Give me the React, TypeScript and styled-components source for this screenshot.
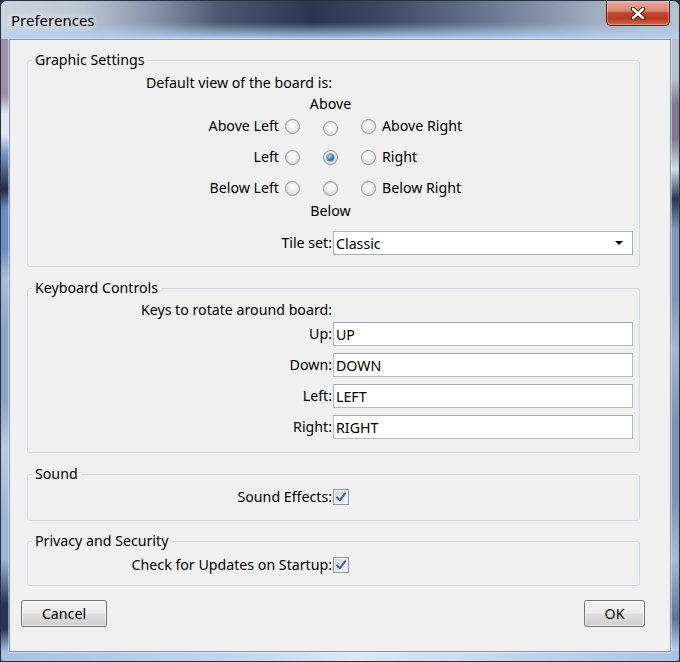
import React from 'react'
import styled, { createGlobalStyle } from 'styled-components'

const GlobalStyle = createGlobalStyle`
  html, body {
    margin: 0;
    padding: 0;
    background: #24324d;
  }
  body {
    font-family: "Noto Sans", "Open Sans", sans-serif;
    font-size: 14.2px;
    color: #000;
  }
  #root {
    width: 680px;
    height: 662px;
  }
`

const Window = styled.div`
  width: 680px;
  height: 662px;
  box-sizing: border-box;
  border: 1px solid #26303f;
  border-radius: 7px 7px 3px 3px;
  overflow: hidden;
  display: flex;
  flex-direction: column;
  background:
    linear-gradient(to bottom, rgba(172, 206, 240, 0) 0, rgba(172, 206, 240, 0) 22px, rgba(176, 210, 242, 0.95) 38px) 0 0 / 100% 38px no-repeat,
    linear-gradient(to right, #cdd4de 0, #bcc5d2 12%, #8b96ab 22%, #4d5973 32%, #2b3552 46%, #3c4864 56%, #5e6b86 68%, #8592aa 80%, #a3aec0 88%, #b7c1cf 100%) 0 0 / 100% 38px no-repeat,
    linear-gradient(to right, #a4c2e4 0, #c6dcf2 40%, #dbe9f8 52%, #a7c4e6 100%) 0 100% / 100% 10px no-repeat,
    linear-gradient(to bottom, #9c92a8 0, #9c92a8 56px, #dce8f4 75px, #dce8f4 96px, #7496c2 115px, #1f2a47 150px, #6a8ec0 170px, #6a8ec0 210px, #a7bfdb 240px, #8aa4c4 290px, #8aa4c4 360px, #b7cbe2 410px, #9ab6d6 480px, #9ab6d6 520px, #25355a 565px, #25355a 590px, #b6d1ee 615px) 0 38px / 9px 100% no-repeat,
    linear-gradient(to bottom, #b4c0d0 0, #b4c0d0 40px, #857892 65px, #857892 100px, #d0dcea 130px, #2a3654 160px, #8099bb 190px, #8099bb 260px, #a4b8d0 310px, #7d96b8 380px, #7d96b8 460px, #a3bdda 520px, #5d7599 580px, #b3cdea 610px) 100% 38px / 9px 100% no-repeat,
    #9fb4cf;
`

const TitleBar = styled.div`
  height: 38px;
  flex: none;
  display: flex;
  justify-content: space-between;
  align-items: center;
`

const Title = styled.div`
  padding-left: 10px;
  font-size: 15px;
  line-height: 18px;
  color: #000;
  text-shadow: 0 0 6px rgba(255, 255, 255, 0.95), 0 0 12px rgba(255, 255, 255, 0.8);
`

const CloseButton = styled.div`
  align-self: flex-start;
  width: 64px;
  height: 25px;
  margin-right: 9px;
  box-sizing: border-box;
  border: 1px solid #5b2118;
  border-top: none;
  border-radius: 0 0 5px 5px;
  background: linear-gradient(to bottom, #e8ad9f 0%, #d98670 42%, #c5442a 50%, #b93b20 74%, #d4694a 100%);
  box-shadow: inset 0 0 0 1px rgba(255, 220, 210, 0.4);
  display: flex;
  align-items: center;
  justify-content: center;
`

const Client = styled.div`
  flex: 1;
  margin: 0 8px 9px 8px;
  border: 1px solid #8592a4;
  box-shadow: 0 0 0 1px rgba(255, 255, 255, 0.45);
  background: #f0f0f0;
  display: flex;
  flex-direction: column;
  padding-top: 12px;
`

const Groups = styled.div`
  display: flex;
  flex-direction: column;
  padding: 0 30px 0 17px;
`

const Group = styled.fieldset<{ $top: number; $pt: number; $pb: number }>`
  margin: ${p => p.$top}px 0 0 0;
  padding: ${p => p.$pt}px 0 ${p => p.$pb}px 0;
  border: 1px solid #d2dbe3;
  border-radius: 3px;
  min-width: 0;
`

const Legend = styled.legend`
  margin-left: 4px;
  padding: 0 3px;
  line-height: 16px;
`

const FormRow = styled.div<{ $top?: number }>`
  display: grid;
  grid-template-columns: 305px 300px;
  align-items: center;
  margin-top: ${p => p.$top ?? 0}px;
`

const Label = styled.div`
  text-align: right;
  padding-right: 1px;
  line-height: 16px;
  white-space: nowrap;
`

const TextField = styled.input`
  height: 24px;
  box-sizing: border-box;
  margin: 0;
  border: 1px solid #b5b8bf;
  border-top-color: #a4a7ae;
  padding: 0 2px;
  background: #fff;
  font: inherit;
  color: #000;
  outline: none;
`

const Combo = styled.div`
  height: 24px;
  box-sizing: border-box;
  border: 1px solid #acaeb4;
  background: #fff;
  padding: 0 9px 0 2px;
  display: flex;
  align-items: center;
  justify-content: space-between;
`

const RadioPanel = styled.div`
  display: flex;
  flex-direction: column;
  margin-top: 5px;
`

const Caption = styled.div<{ $top?: number }>`
  display: grid;
  grid-template-columns: 295px 15px;
  margin-top: ${p => p.$top ?? 0}px;
  line-height: 16px;
`

const CaptionText = styled.div`
  grid-column: 2;
  display: flex;
  justify-content: center;
  white-space: nowrap;
`

const RadioRow = styled.div<{ $top: number }>`
  display: grid;
  grid-template-columns: 257px 38px 38px 1fr;
  align-items: center;
  height: 20px;
  margin-top: ${p => p.$top}px;
  line-height: 16px;
`

const RadioLabel = styled.div`
  text-align: right;
  padding-right: 6px;
  white-space: nowrap;
`

const RadioCell = styled.div<{ $drop?: number }>`
  display: flex;
  align-items: center;
  gap: 6px;
  white-space: nowrap;
  transform: translateY(${p => p.$drop ?? 0}px);
`

const RadioDot = styled.span<{ $checked?: boolean }>`
  width: 15px;
  height: 15px;
  box-sizing: border-box;
  flex: none;
  border-radius: 50%;
  border: 1px solid #8d9095;
  background: radial-gradient(circle at 50% 40%, #ffffff 0, #ececec 45%, #d3d3d3 100%);
  display: flex;
  align-items: center;
  justify-content: center;
  &::after {
    content: '';
    display: ${p => (p.$checked ? 'block' : 'none')};
    width: 7px;
    height: 7px;
    border-radius: 50%;
    background: radial-gradient(circle at 40% 35%, #a8ddf8 0, #2b83bd 50%, #0d3f6b 100%);
    box-shadow: 0 0 0 1px rgba(20, 60, 100, 0.35);
  }
`

const CheckBox = styled.span`
  width: 16px;
  height: 16px;
  box-sizing: border-box;
  border: 1px solid #8f9298;
  background: linear-gradient(135deg, #c9d3e0 0, #e4e9f0 55%, #f6f8fa 100%);
  box-shadow: inset 0 0 0 1px #f3f5f8;
  display: flex;
  align-items: center;
  justify-content: center;
`

const ButtonBar = styled.div`
  display: flex;
  justify-content: space-between;
  margin-top: 14px;
  padding: 0 25px 0 11px;
`

const Button = styled.button<{ $width: number }>`
  width: ${p => p.$width}px;
  height: 27px;
  margin: 0;
  padding: 0;
  border: 1px solid #707070;
  border-radius: 3px;
  background: linear-gradient(to bottom, #f2f2f2 0, #ebebeb 48%, #dddddd 52%, #cfcfcf 100%);
  box-shadow: inset 0 0 0 1px rgba(255, 255, 255, 0.75);
  font: inherit;
  color: #000;
`

type RadioSpec = { label: string; right: string; checked?: number }

const rows: RadioSpec[] = [
  { label: 'Above Left', right: 'Above Right' },
  { label: 'Left', right: 'Right', checked: 1 },
  { label: 'Below Left', right: 'Below Right' },
]

const keys = [
  { label: 'Up:', value: 'UP' },
  { label: 'Down:', value: 'DOWN' },
  { label: 'Left:', value: 'LEFT' },
  { label: 'Right:', value: 'RIGHT' },
]

const Check = () => (
  <CheckBox role="checkbox" aria-checked="true">
    <svg width="12" height="12" viewBox="0 0 12 12">
      <path d="M2 6.4 L4.8 9.3 L10.2 2.2" fill="none" stroke="#3f5f9f" strokeWidth="2" strokeLinecap="round" strokeLinejoin="round" />
    </svg>
  </CheckBox>
)

export default function App() {
  return (
    <>
      <GlobalStyle />
      <Window>
        <TitleBar>
          <Title>Preferences</Title>
          <CloseButton>
            <svg width="16" height="13" viewBox="0 0 16 13">
              <path d="M3 2 L13 11 M13 2 L3 11" stroke="#4a1a12" strokeWidth="4.6" strokeLinecap="round" />
              <path d="M3 2 L13 11 M13 2 L3 11" stroke="#ffffff" strokeWidth="2.6" strokeLinecap="round" />
            </svg>
          </CloseButton>
        </TitleBar>
        <Client>
          <Groups>
            <Group $top={0} $pt={7} $pb={11}>
              <Legend>Graphic Settings</Legend>
              <FormRow>
                <Label>Default view of the board is:</Label>
              </FormRow>
              <RadioPanel>
                <Caption>
                  <CaptionText>Above</CaptionText>
                </Caption>
                {rows.map((r, i) => (
                  <RadioRow key={r.label} $top={i === 0 ? 4 : 11}>
                    <RadioLabel>{r.label}</RadioLabel>
                    <RadioCell>
                      <RadioDot role="radio" />
                    </RadioCell>
                    <RadioCell $drop={i === 0 ? 2 : 0}>
                      <RadioDot role="radio" $checked={r.checked === 1} />
                    </RadioCell>
                    <RadioCell>
                      <RadioDot role="radio" />
                      {r.right}
                    </RadioCell>
                  </RadioRow>
                ))}
                <Caption $top={5}>
                  <CaptionText>Below</CaptionText>
                </Caption>
              </RadioPanel>
              <FormRow $top={12}>
                <Label>Tile set:</Label>
                <Combo>
                  <span>Classic</span>
                  <svg width="8" height="4" viewBox="0 0 8 4">
                    <path d="M0 0 H8 L4 4 Z" fill="#000" />
                  </svg>
                </Combo>
              </FormRow>
            </Group>

            <Group $top={13} $pt={6} $pb={13}>
              <Legend>Keyboard Controls</Legend>
              <FormRow>
                <Label>Keys to rotate around board:</Label>
              </FormRow>
              {keys.map((k, i) => (
                <FormRow key={k.label} $top={i === 0 ? 4 : 7}>
                  <Label>{k.label}</Label>
                  <TextField readOnly value={k.value} />
                </FormRow>
              ))}
            </Group>

            <Group $top={13} $pt={7} $pb={15}>
              <Legend>Sound</Legend>
              <FormRow>
                <Label>Sound Effects:</Label>
                <Check />
              </FormRow>
            </Group>

            <Group $top={12} $pt={8} $pb={12}>
              <Legend>Privacy and Security</Legend>
              <FormRow>
                <Label>Check for Updates on Startup:</Label>
                <Check />
              </FormRow>
            </Group>
          </Groups>
          <ButtonBar>
            <Button $width={86}>Cancel</Button>
            <Button $width={61}>OK</Button>
          </ButtonBar>
        </Client>
      </Window>
    </>
  )
}
